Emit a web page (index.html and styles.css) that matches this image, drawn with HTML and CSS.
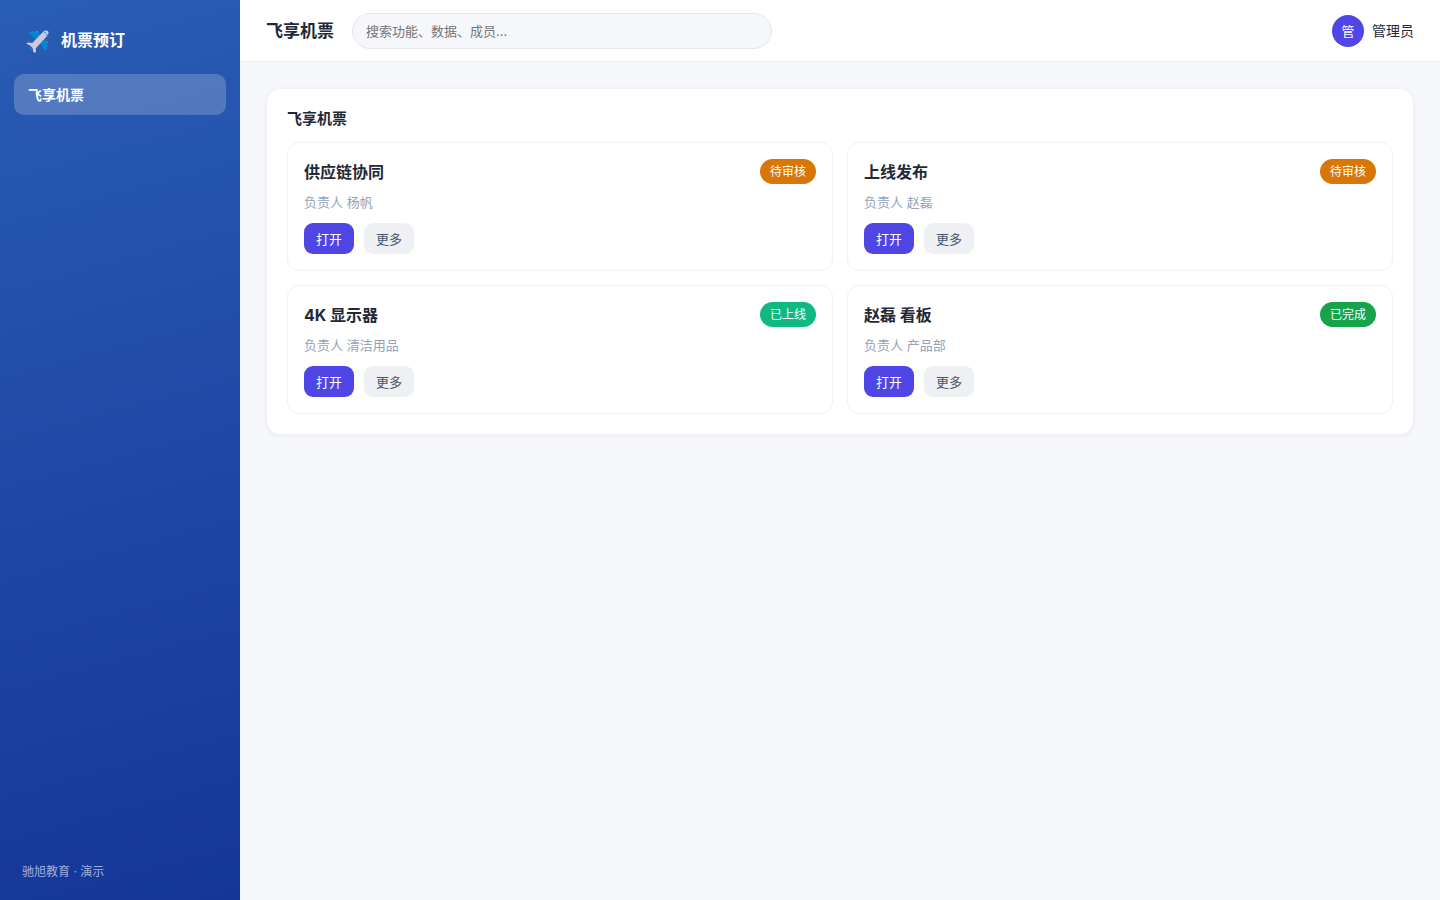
FILE: index.html
```
<!DOCTYPE html>
<html lang="zh-CN">
<head>
  <meta charset="UTF-8">
  <meta name="viewport" content="width=device-width, initial-scale=1">
  <title>飞享机票</title>
  <link rel="stylesheet" href="styles.css">
</head>
<body>

  <aside class="sidebar">
    <div class="brand">
      <svg class="brand-icon" viewBox="0 0 24 24" aria-hidden="true">
        <path fill="#8a8f98" d="M10.5 1.2h2.2v2.6h-2.2zM20.5 11.5h2v2.4h-2z"/>
        <path fill="#0288d1" d="M3.2 2.6L4.6 1.2l6 .6 5 3.2-4.6 5.6L7.2 7 4 4.600zM21.600 20.800l.8-2-.3-5.400-2.600-5-5.500 5 3.200 4 2.600 3.600zM3.200 19.500l2-1.200 1.600 1.600-1.600 1.200-.8-.8z"/>
        <path fill="#cfc8dc" d="M23 1.200c-1.300-1.200-3.800-.6-5.300.9L6.600 13.600l-4.400-.5L.2 14.200l4.300 2.200 1.600 1.500.8 1 .7 4 1.700.9 1.300-.8-.5-3.600L21.900 6.200c1.400-1.500 2.200-3.700 1.100-5z"/>
        <path fill="#0288d1" d="M18.800 2.600l1.400-.7.6.8-.9.9zM20.700 4.800l1.200-.9.400.8-.8 1z"/>
      </svg>
      <span>机票预订</span>
    </div>
    <nav class="nav">
      <a class="nav-item active" href="#">飞享机票</a>
    </nav>
    <div class="sidebar-footer">驰旭教育 · 演示</div>
  </aside>

  <div class="main">
    <header class="topbar">
      <h1 class="page-title">飞享机票</h1>
      <input class="search" type="search" placeholder="搜索功能、数据、成员…" aria-label="搜索">
      <div class="user">
        <span class="avatar">管</span>
        <span>管理员</span>
      </div>
    </header>

    <main class="content">
      <section class="panel">
        <h2 class="panel-title">飞享机票</h2>
        <div class="grid">
          <article class="card">
            <div class="card-head">
              <h3>供应链协同</h3>
              <span class="badge pending">待审核</span>
            </div>
            <p class="owner">负责人 杨帆</p>
            <div class="actions">
              <button class="btn primary" type="button">打开</button>
              <button class="btn" type="button">更多</button>
            </div>
          </article>
          <article class="card">
            <div class="card-head">
              <h3>上线发布</h3>
              <span class="badge pending">待审核</span>
            </div>
            <p class="owner">负责人 赵磊</p>
            <div class="actions">
              <button class="btn primary" type="button">打开</button>
              <button class="btn" type="button">更多</button>
            </div>
          </article>
          <article class="card">
            <div class="card-head">
              <h3>4K 显示器</h3>
              <span class="badge online">已上线</span>
            </div>
            <p class="owner">负责人 清洁用品</p>
            <div class="actions">
              <button class="btn primary" type="button">打开</button>
              <button class="btn" type="button">更多</button>
            </div>
          </article>
          <article class="card">
            <div class="card-head">
              <h3>赵磊 看板</h3>
              <span class="badge done">已完成</span>
            </div>
            <p class="owner">负责人 产品部</p>
            <div class="actions">
              <button class="btn primary" type="button">打开</button>
              <button class="btn" type="button">更多</button>
            </div>
          </article>
        </div>
      </section>
    </main>
  </div>

</body>
</html>
```
FILE: styles.css
```
* {
  box-sizing: border-box;
}
body {
  display: flex;
  min-height: 100vh;
  margin: 0;
  background: #f5f7fb;
  color: #1f2937;
  font-family: Inter, "Noto Sans CJK SC", sans-serif;
  font-size: 14px;
  line-height: 20px;
}
h1, h2, h3, p {
  margin: 0;
}
button, input {
  font-family: inherit;
}
.sidebar {
  display: flex;
  flex-direction: column;
  flex: 0 0 240px;
  padding: 22px 14px 18px;
  background: linear-gradient(165deg, #2a5db4, #143699);
  color: #fff;
}
.brand {
  display: flex;
  align-items: center;
  gap: 12px;
  height: 36px;
  padding: 0 12px;
  margin-bottom: 16px;
  font-size: 16px;
  font-weight: 700;
}
.brand-icon {
  width: 23px;
  height: 23px;
  margin-top: 2px;
}
.nav {
  flex: 1;
}
.nav-item {
  display: block;
  padding: 10px 14px;
  border-radius: 10px;
  color: #fff;
  line-height: 21px;
  text-decoration: none;
}
.nav-item.active {
  background: rgba(255, 255, 255, 0.2);
  font-weight: 700;
}
.sidebar-footer {
  padding: 0 8px;
  color: rgba(255, 255, 255, 0.6);
  font-size: 12px;
}
.main {
  flex: 1;
  min-width: 0;
}
.topbar {
  display: flex;
  align-items: center;
  gap: 18px;
  height: 62px;
  padding: 0 26px;
  background: #fff;
  border-bottom: 1px solid #eceef2;
}
.page-title {
  font-size: 17px;
  font-weight: 700;
}
.search {
  flex: 0 1 420px;
  min-width: 0;
  height: 36px;
  padding: 0 13px;
  border: 1px solid #e5e7eb;
  border-radius: 18px;
  background: #f5f7fb;
  color: inherit;
  font-size: 13px;
  appearance: none;
}
.search::placeholder {
  color: #757575;
}
.user {
  display: flex;
  align-items: center;
  gap: 8px;
  margin-left: auto;
}
.avatar {
  width: 32px;
  border-radius: 50%;
  background: #4f46e5;
  color: #fff;
  font-size: 13px;
  line-height: 32px;
  text-align: center;
}
.content {
  padding: 26px;
}
.panel {
  padding: 20px;
  border: 1px solid #eff1f5;
  border-radius: 14px;
  background: #fff;
  box-shadow: 0 1px 4px rgba(20, 30, 60, 0.05);
}
.panel-title {
  margin-bottom: 14px;
  font-size: 15px;
  font-weight: 700;
  line-height: 19px;
}
.grid {
  display: grid;
  grid-template-columns: repeat(2, 1fr);
  gap: 14px;
}
.card {
  padding: 16px;
  border: 1px solid #eff0f3;
  border-radius: 12px;
}
.card-head {
  display: flex;
  align-items: center;
  justify-content: space-between;
}
.card-head h3 {
  font-size: 16px;
  font-weight: 700;
}
.badge {
  padding: 0 10px;
  border-radius: 13px;
  color: #fff;
  font-size: 12px;
  line-height: 25px;
}
.badge.pending {
  background: #d97706;
}
.badge.online {
  background: #10b981;
}
.badge.done {
  background: #16a34a;
}
.owner {
  margin: 8px 0 11px;
  color: #94a3b8;
  font-size: 13px;
}
.actions {
  display: flex;
  gap: 10px;
}
.btn {
  height: 31px;
  padding: 0 12px;
  border: 0;
  border-radius: 9px;
  background: #eef0f4;
  color: #475569;
  font-size: 13px;
}
.btn.primary {
  background: #4f46e5;
  color: #fff;
}
```
